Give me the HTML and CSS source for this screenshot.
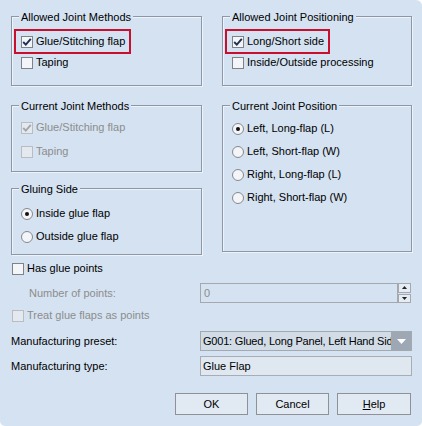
FILE: index.html
```html
<!DOCTYPE html>
<html lang="en">
<head>
  <meta charset="UTF-8" />
  <meta name="viewport" content="width=device-width, initial-scale=1.0"/>
  <title>Joint Settings</title>
  <link rel="stylesheet" href="styles.css">
</head>
<body>

  <div class="dialog">

    <div class="groups">
      <div class="group allowed">
        <span class="group-title">Allowed Joint Methods</span>
        <div class="opt marked">
          <span class="box"><svg width="10" height="10" viewBox="0 0 10 10"><path d="M1.2 5 L3.8 7.6 L8.8 1.8" fill="none" stroke="#1d3252" stroke-width="1.9"/></svg></span>
          <span>Glue/Stitching flap</span>
        </div>
        <div class="opt"><span class="box"></span><span>Taping</span></div>
      </div>

      <div class="group allowed">
        <span class="group-title">Allowed Joint Positioning</span>
        <div class="opt marked">
          <span class="box"><svg width="10" height="10" viewBox="0 0 10 10"><path d="M1.2 5 L3.8 7.6 L8.8 1.8" fill="none" stroke="#1d3252" stroke-width="1.9"/></svg></span>
          <span>Long/Short side</span>
        </div>
        <div class="opt"><span class="box"></span><span>Inside/Outside processing</span></div>
      </div>

      <div class="stack">
        <div class="group methods">
          <span class="group-title">Current Joint Methods</span>
          <div class="opt disabled">
            <span class="box"><svg width="10" height="10" viewBox="0 0 10 10"><path d="M1.2 5 L3.8 7.6 L8.8 1.8" fill="none" stroke="#a2a7ad" stroke-width="1.9"/></svg></span>
            <span>Glue/Stitching flap</span>
          </div>
          <div class="opt disabled"><span class="box"></span><span>Taping</span></div>
        </div>

        <div class="group gluing">
          <span class="group-title">Gluing Side</span>
          <div class="opt"><span class="radio on"></span><span>Inside glue flap</span></div>
          <div class="opt"><span class="radio"></span><span>Outside glue flap</span></div>
        </div>
      </div>

      <div class="group position">
        <span class="group-title">Current Joint Position</span>
        <div class="opt"><span class="radio on"></span><span>Left, Long-flap (L)</span></div>
        <div class="opt"><span class="radio"></span><span>Left, Short-flap (W)</span></div>
        <div class="opt"><span class="radio"></span><span>Right, Long-flap (L)</span></div>
        <div class="opt"><span class="radio"></span><span>Right, Short-flap (W)</span></div>
      </div>
    </div>

    <div class="opt plain glue-points"><span class="box"></span><span>Has glue points</span></div>

    <div class="field points">
      <span class="field-label disabled-text">Number of points:</span>
      <div class="spin">
        <div class="spin-input">0</div>
        <div class="spin-buttons">
          <span class="spin-btn"><svg width="5" height="3" viewBox="0 0 5 3"><path d="M2.5 0 L5 3 L0 3 Z" fill="#222"/></svg></span>
          <span class="spin-btn"><svg width="5" height="3" viewBox="0 0 5 3"><path d="M0 0 L5 0 L2.5 3 Z" fill="#222"/></svg></span>
        </div>
      </div>
    </div>

    <div class="opt plain disabled treat"><span class="box"></span><span>Treat glue flaps as points</span></div>

    <div class="field preset">
      <span class="field-label">Manufacturing preset:</span>
      <div class="combo">
        <span class="combo-text">G001: Glued, Long Panel, Left Hand Side</span>
        <span class="combo-btn"><svg width="9" height="5" viewBox="0 0 9 5"><path d="M0 0 L9 0 L4.5 5 Z" fill="#fff"/></svg></span>
      </div>
    </div>

    <div class="field type">
      <span class="field-label">Manufacturing type:</span>
      <div class="text-input">Glue Flap</div>
    </div>

    <div class="buttons">
      <button class="btn">OK</button>
      <button class="btn">Cancel</button>
      <button class="btn help"><u>H</u>elp</button>
    </div>

  </div>

</body>
</html>
```

FILE: styles.css
```css
body {
  margin: 0;
  background: #fff;
  font-family: "Liberation Sans", Arial, sans-serif;
  font-size: 11px;
  color: #000;
}

.dialog {
  width: 422px;
  height: 426px;
  box-sizing: border-box;
  background: #d4e2f1;
  border-radius: 0 6px 5px 5px;
  padding: 16px 10px 0 11px;
}

.groups {
  display: grid;
  grid-template-columns: 191px 190px;
  column-gap: 20px;
  row-gap: 19px;
  align-items: start;
}

.stack {
  display: flex;
  flex-direction: column;
  gap: 16px;
}

.group {
  position: relative;
  box-sizing: border-box;
  border: 1px solid #8c98a7;
  box-shadow: inset 1px 1px 0 rgba(255, 255, 255, 0.6), 1px 1px 0 rgba(255, 255, 255, 0.6);
  display: flex;
  flex-direction: column;
  align-items: flex-start;
  padding-left: 9px;
}

.group-title {
  position: absolute;
  top: -6px;
  left: 7px;
  padding: 0 2px;
  line-height: 13px;
  background: #d4e2f1;
}

.allowed { height: 70px; padding-top: 18px; }
.allowed .opt + .opt { margin-top: 8px; }

.methods { height: 67px; padding-top: 15px; }
.methods .opt + .opt { margin-top: 11px; }

.gluing { height: 67px; padding-top: 18px; }
.gluing .opt + .opt { margin-top: 10px; }

.position { height: 147px; padding-top: 16px; }
.position .opt + .opt { margin-top: 10px; }

.opt {
  display: flex;
  align-items: flex-start;
  gap: 3px;
  height: 13px;
  line-height: 13px;
  white-space: nowrap;
}

.opt.marked {
  border: 2px solid #c8102e;
  padding: 4px 4px 4px 5px;
  margin: -6px 0 -6px -7px;
}

.box {
  width: 12px;
  height: 12px;
  margin-top: 1px;
  box-sizing: border-box;
  border: 1px solid #7f8388;
  background: #f3f5f8;
  display: flex;
  align-items: center;
  justify-content: center;
}

.radio {
  width: 12px;
  height: 12px;
  margin-top: 1px;
  box-sizing: border-box;
  border: 1px solid #85898e;
  border-radius: 50%;
  background: #f3f5f8;
  display: flex;
  align-items: center;
  justify-content: center;
}

.radio.on::after {
  content: "";
  width: 4px;
  height: 4px;
  border-radius: 50%;
  background: #111;
}

.disabled { color: #8d8d8d; }
.disabled .box { border-color: #b9bcc0; background: #e4e9ef; }
.disabled-text { color: #8d8d8d; }

.plain { margin-left: 1px; }
.glue-points { margin-top: 7px; }
.treat { margin-top: 6px; }

.field {
  display: grid;
  grid-template-columns: 189px 212px;
  align-items: center;
  height: 20px;
}

.points { margin-top: 8px; }
.points .field-label { padding-left: 18px; }
.preset { margin-top: 9px; }
.type { margin-top: 5px; }

.spin {
  display: flex;
  width: 211px;
  height: 20px;
}

.spin-input {
  width: 198px;
  box-sizing: border-box;
  border: 1px solid #a5a9ad;
  color: #8d8d8d;
  padding-left: 3px;
  line-height: 18px;
}

.spin-buttons {
  width: 13px;
  display: flex;
  flex-direction: column;
  gap: 1px;
}

.spin-btn {
  flex: 1;
  box-sizing: border-box;
  border: 1px solid #a5a9ad;
  background: #e6ecf3;
  display: flex;
  align-items: center;
  justify-content: center;
}

.combo {
  display: flex;
  height: 20px;
  box-sizing: border-box;
  border: 1px solid #a2a9b1;
  background: #d2dce7;
  overflow: hidden;
}

.combo-text {
  flex: 1;
  overflow: hidden;
  white-space: nowrap;
  padding-left: 2px;
  line-height: 18px;
  letter-spacing: -0.2px;
}

.combo-btn {
  width: 20px;
  flex-shrink: 0;
  background: #9ea8b4;
  display: flex;
  align-items: center;
  justify-content: center;
}

.text-input {
  height: 20px;
  box-sizing: border-box;
  border: 1px solid #a7adb3;
  background: #dfe7f0;
  padding-left: 2px;
  line-height: 18px;
}

.buttons {
  display: flex;
  justify-content: flex-end;
  gap: 8px;
  margin-top: 17px;
  padding-right: 1px;
}

.btn {
  width: 73px;
  height: 22px;
  box-sizing: border-box;
  border: 1px solid #8f9196;
  background: #e1e9f2;
  font: inherit;
  color: #000;
  padding: 0;
}

.btn.help { width: 74px; }
```
